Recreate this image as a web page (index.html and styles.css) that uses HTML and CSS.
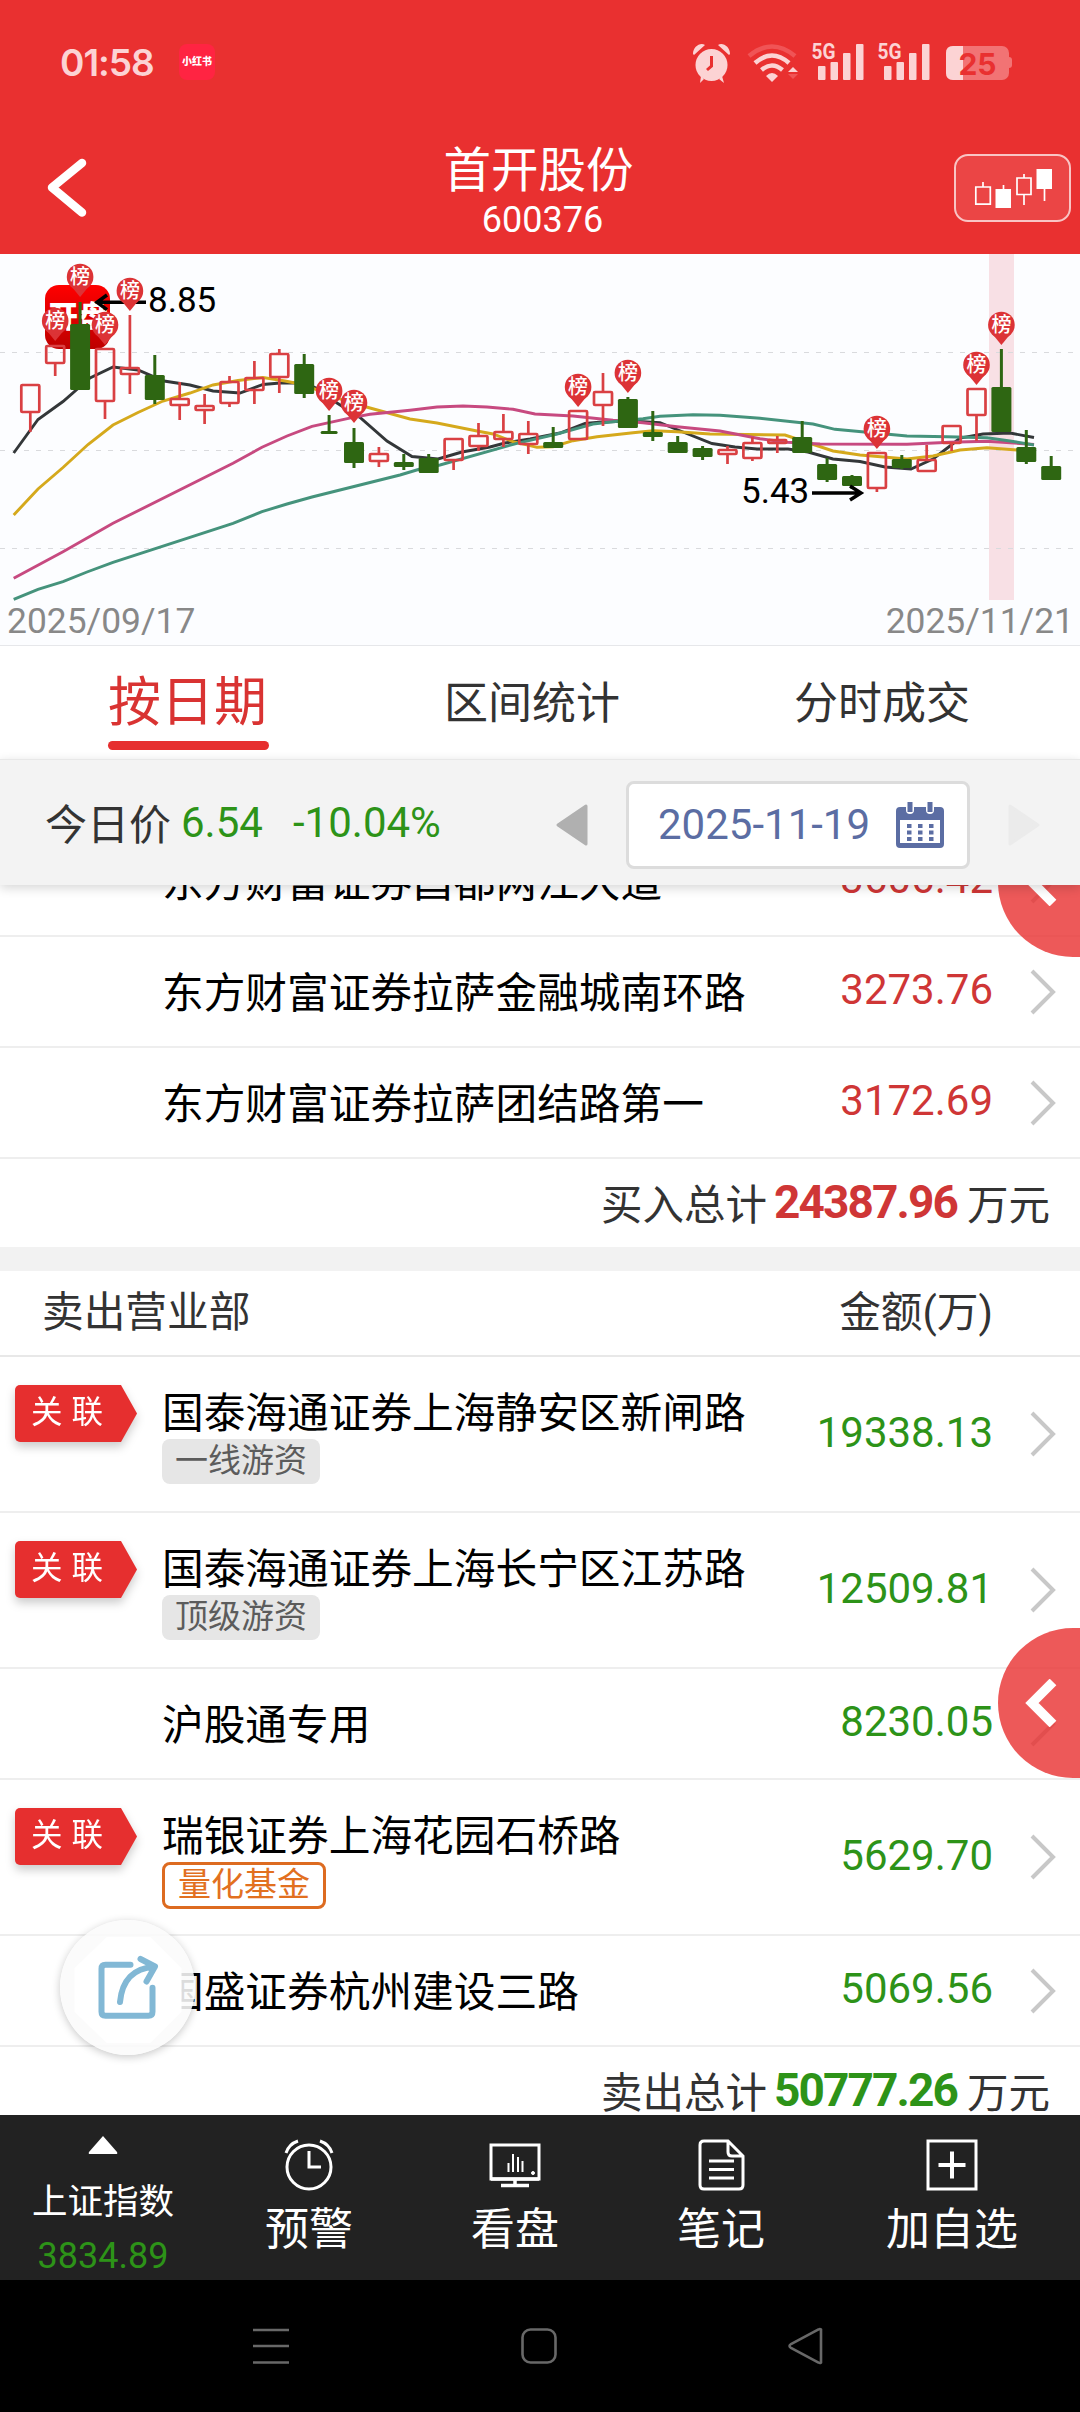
FILE: index.html
```html
<!DOCTYPE html>
<html lang="zh-CN">
<head>
  <meta charset="UTF-8" />
  <meta name="viewport" content="width=device-width, initial-scale=1.0" />
  <title>首开股份 600376</title>
  <link rel="stylesheet" href="styles.css">
</head>
<body>
  <div class="app">
    <!-- Status bar -->
    <div class="status-bar">
      <span class="status-time">01:58</span>
      <span class="status-app">小红书</span>
      <svg class="status-icons" width="322" height="44" viewBox="692 40 322 44">
        <g fill="#fcd3d4">
          <!-- alarm -->
          <circle cx="711.5" cy="65" r="16"/>
          <path d="M693 54c0-7 7-12 12-9l-11 10zM730 54c0-7-7-12-12-9l11 10zM701 76l3 3-4 4zM722 76l-3 3 5 4z"/>
          <!-- wifi -->
          <path d="M772 82l-6-6q6-6 12 0z"/>
          <path d="M793 67l5 5h-10z"/>
          <!-- signal -->
          <rect x="818" y="66" width="7.5" height="14" rx="1"/>
          <rect x="830.5" y="62" width="7.5" height="18" rx="1"/>
          <rect x="843" y="53" width="7.5" height="27" rx="1"/>
          <rect x="856" y="44" width="7.5" height="36" rx="1"/>
          <rect x="884" y="66" width="7.5" height="14" rx="1"/>
          <rect x="896.5" y="62" width="7.5" height="18" rx="1"/>
          <rect x="909" y="53" width="7.5" height="27" rx="1"/>
          <rect x="922" y="44" width="7.5" height="36" rx="1"/>
        </g>
        <path d="M788 74h10l-5 5z" fill="#f05456"/>
        <g fill="none" stroke-width="4.5">
          <path d="M749 56q23-19 46 0" stroke="#f05456"/>
          <path d="M755 63q17-15 34 0M761.500 70q10.500-9 21 0" stroke="#fcd3d4"/>
          <path d="M711.500 56v10l-4.500 4" stroke="#e93030" stroke-width="3"/>
        </g>
        <text class="net" x="811.500" y="59" textLength="24" lengthAdjust="spacingAndGlyphs">5G</text>
        <text class="net" x="877.500" y="59" textLength="24" lengthAdjust="spacingAndGlyphs">5G</text>
        <!-- battery -->
        <rect x="946" y="46" width="63" height="34" rx="7" fill="#f27374"/>
        <path d="M1009 57q3 0 3 3v5q0 3-3 3z" fill="#f27374"/>
        <path d="M963 46h-10q-7 0-7 7v20q0 7 7 7h10z" fill="#fcd3d4"/>
        <text class="level" x="977.500" y="74.500" text-anchor="middle">25</text>
      </svg>
    </div>

    <!-- Header -->
    <div class="header">
      <svg class="back" width="46" height="64" viewBox="44 156 46 64">
        <path d="M82 163L52 187.500l30 25" fill="none" stroke="#fff" stroke-width="8.500" stroke-linecap="round" stroke-linejoin="round"/>
      </svg>
      <div class="title">
        <h1>首开股份</h1>
        <span>600376</span>
      </div>
      <div class="kline-button">
        <svg width="80" height="40" viewBox="973 167 80 40">
          <g fill="none" stroke="#fff" stroke-width="1.700">
            <path d="M974.800 186h14.500v17.200h-14.500zM982 186v-5M1002.500 188v-4M1016 177h14v16.500h-14zM1023 177v-4M1023 193v11M1043.500 188v12"/>
          </g>
          <path d="M994.500 188h15.500v19h-15.500zM1035.500 168h15.500v20h-15.500z" fill="#fff"/>
        </svg>
      </div>
    </div>

    <!-- K line chart, candles and pins are filled in by the script below -->
    <svg class="chart" width="1080" height="391" viewBox="0 254 1080 391">
      <defs>
        <linearGradient id="badge" x1="0" y1="0" x2="0" y2="1">
          <stop offset="0" stop-color="#ff0000"/>
          <stop offset="1" stop-color="#bd0000"/>
        </linearGradient>
      </defs>
      <rect x="989" y="254" width="25" height="346" fill="#f8e0e5"/>
      <path class="grid" d="M0 352.500h1074M0 450.500h1074M0 548.500h1074"/>
      <rect x="45" y="285" width="65" height="64" rx="14" fill="url(#badge)"/>
      <text class="badge-text" x="78" y="327" text-anchor="middle">开盘</text>
      <g class="ma">
        <polyline stroke="#333739" points="13.700,453 38,419.500 63,401.500 90,378 113,367 138,370 164,381 190,385 213,391 240,393 263,384.500 280,383 305,383 318,389 337,403 360,417.500 387,441 412,456.500 438,459 462,452 490,447 505,443 530,439 560,433 585,423.500 602,422 630,421 660,422.700 678,430 712,443.500 735,447 757,449 788,449 808,452 833,459 860,461.500 885,467 911,469 933,459 950,446 960,438 983,434 1010,433 1034,437.500"/>
        <polyline stroke="#d5a91c" points="13.700,515 38,489 63,467.500 88,444.500 113,425 138,412.500 163,401 190,393 213,385 238,380.500 263,377.500 285,381 300,384 318,390 345,401 370,408 410,419 437,423 477,431 493,434 513,441.700 537,447.300 553,446.700 573,440.700 597,436.700 633,432.700 653,430.700 677,431.700 710,434 785,435 797,439 833,451 860,455 907,459 933,456 960,450 987,447.700 1017,450 1034,451.500"/>
        <polyline stroke="#c74a80" points="13.700,578.300 63,551.700 113,523.300 233,463.300 262,447.300 287,436 312,426.300 353,417.300 370,414.300 410,410.300 437,407 463,406 487,407 513,409.300 535,414 573,416 613,420.300 643,422.700 677,426.700 720,431 760,438.700 787,442.300 820,444 907,444.300 950,442.300 987,441.300 1034,444.500"/>
        <polyline stroke="#45937c" points="13.700,599.300 38,589.300 63,581.700 87,572 113,562.300 233,523.300 262,511.700 287,504 312,497 400,475 420,469 440,465 517,443.300 557,434 593,424 613,421.700 643,418.700 660,416.300 693,414.700 720,415.300 760,418.300 813,424 835,429.300 907,436 947,436.700 987,437.700 1010,441 1034,445"/>
      </g>
      <g id="candles"></g>
      <g fill="none" stroke="#000" stroke-width="3.500">
        <path d="M97 302.300h49M107 295l-10 7.300 10 7.300"/>
        <path d="M812 493h48M850 486l11 7-11 7"/>
      </g>
      <text class="price" x="148" y="311.500">8.85</text>
      <text class="price" x="741" y="502.500">5.43</text>
      <g id="pins"></g>
      <text class="date" x="7" y="633">2025/09/17</text>
      <text class="date" x="1074" y="633" text-anchor="end">2025/11/21</text>
    </svg>

    <!-- Tabs -->
    <div class="tabs">
      <div class="tab active">按日期</div>
      <div class="tab">区间统计</div>
      <div class="tab">分时成交</div>
    </div>

    <!-- Price and date picker -->
    <div class="price-bar">
      <span class="label">今日价</span>
      <span class="value">6.54</span>
      <span class="percent">-10.04%</span>
      <svg class="prev" width="32" height="42" viewBox="0 0 32 42"><path d="M2 21L30 2v38z" fill="#b0b0b0" stroke="#b0b0b0" stroke-width="3" stroke-linejoin="round"/></svg>
      <div class="date-box">
        <span>2025-11-19</span>
        <svg width="48" height="46" viewBox="0 0 48 46">
          <path d="M4 5h6v3a4 4 0 0 0 8 0V5h12v3a4 4 0 0 0 8 0V5h6q4 0 4 4v33q0 4-4 4H4q-4 0-4-4V9q0-4 4-4zM4 18v23h40V18z" fill="#5b6da3" fill-rule="evenodd"/>
          <path d="M14 0v10M34 0v10" stroke="#5b6da3" stroke-width="5"/>
          <path d="M11 24h28M11 30.500h28M11 37h28" stroke="#5b6da3" stroke-width="4" stroke-dasharray="4.500 6.500"/>
        </svg>
      </div>
      <svg class="next" width="32" height="42" viewBox="0 0 32 42"><path d="M30 21L2 2v38z" fill="#ebebeb" stroke="#ebebeb" stroke-width="3" stroke-linejoin="round"/></svg>
    </div>

    <!-- Broker list -->
    <div class="list">
      <div class="list-scroll">
        <div class="row">
          <div class="name">东方财富证券昌都两江大道</div>
          <div class="amount buy">3606.42</div>
          <svg class="arrow" viewBox="0 0 26 46"><path d="M2 2l21 21L2 44"/></svg>
        </div>
        <div class="row">
          <div class="name">东方财富证券拉萨金融城南环路</div>
          <div class="amount buy">3273.76</div>
          <svg class="arrow" viewBox="0 0 26 46"><path d="M2 2l21 21L2 44"/></svg>
        </div>
        <div class="row">
          <div class="name">东方财富证券拉萨团结路第一</div>
          <div class="amount buy">3172.69</div>
          <svg class="arrow" viewBox="0 0 26 46"><path d="M2 2l21 21L2 44"/></svg>
        </div>
        <div class="total">买入总计<b class="buy">24387.96</b>万元</div>
        <div class="section-head">
          <span>卖出营业部</span>
          <span>金额(万)</span>
        </div>
        <div class="row tagged">
          <div class="ribbon"><span>关联</span></div>
          <div class="name">国泰海通证券上海静安区新闸路<br><span class="tag">一线游资</span></div>
          <div class="amount sell">19338.13</div>
          <svg class="arrow" viewBox="0 0 26 46"><path d="M2 2l21 21L2 44"/></svg>
        </div>
        <div class="row tagged">
          <div class="ribbon"><span>关联</span></div>
          <div class="name">国泰海通证券上海长宁区江苏路<br><span class="tag">顶级游资</span></div>
          <div class="amount sell">12509.81</div>
          <svg class="arrow" viewBox="0 0 26 46"><path d="M2 2l21 21L2 44"/></svg>
        </div>
        <div class="row">
          <div class="name">沪股通专用</div>
          <div class="amount sell">8230.05</div>
          <svg class="arrow" viewBox="0 0 26 46"><path d="M2 2l21 21L2 44"/></svg>
        </div>
        <div class="row tagged">
          <div class="ribbon"><span>关联</span></div>
          <div class="name">瑞银证券上海花园石桥路<br><span class="tag fund">量化基金</span></div>
          <div class="amount sell">5629.70</div>
          <svg class="arrow" viewBox="0 0 26 46"><path d="M2 2l21 21L2 44"/></svg>
        </div>
        <div class="row">
          <div class="name">国盛证券杭州建设三路</div>
          <div class="amount sell">5069.56</div>
          <svg class="arrow" viewBox="0 0 26 46"><path d="M2 2l21 21L2 44"/></svg>
        </div>
        <div class="total">卖出总计<b class="sell">50777.26</b>万元</div>
      </div>

      <!-- Floating buttons -->
      <div class="side-button top">
        <svg width="32" height="48" viewBox="0 0 32 48"><path d="M28 3L7 24l21 21" fill="none" stroke="#fff" stroke-width="9.500"/></svg>
      </div>
      <div class="side-button">
        <svg width="32" height="48" viewBox="0 0 32 48"><path d="M28 3L7 24l21 21" fill="none" stroke="#fff" stroke-width="9.500"/></svg>
      </div>
      <div class="share-button">
        <svg width="135" height="135" viewBox="59.500 1920 135 135">
          <path d="M106 1937h44l31 31v44l-31 31h-44l-32-31v-44z" fill="#fff"/>
          <g fill="none" stroke="#82b8d5" stroke-width="6" stroke-linecap="round" stroke-linejoin="round">
            <path d="M130 1964.700h-25q-4 0-4 4v43q0 4 4 4h43q4 0 4-4v-24"/>
            <path d="M119.500 2002c2-22 14-34 34-35M140 1959l14.500 7.500-8.500 15"/>
          </g>
        </svg>
      </div>
    </div>

    <!-- Toolbar -->
    <div class="toolbar">
      <div class="index">
        <svg width="30" height="18" viewBox="0 0 30 18"><path d="M15 0L29 16q1 2-1 2H2q-2 0-1-2z" fill="#fff"/></svg>
        <span class="index-name">上证指数</span>
        <span class="index-value">3834.89</span>
      </div>
      <div class="tool">
        <svg viewBox="0 0 52 52" fill="none" stroke="#fff" stroke-width="3">
          <circle cx="26" cy="28" r="22"/>
          <path d="M26 12v16h12M3 14Q6 5 15 2M37 2q9 3 12 12"/>
        </svg>
        <span>预警</span>
      </div>
      <div class="tool">
        <svg viewBox="0 0 52 52" fill="none" stroke="#fff" stroke-width="3">
          <path d="M2 6h48v34H2z"/>
          <path d="M2 40h48M26 40v6M12 46.500h28" stroke-width="3.500"/>
          <path d="M19.500 24v9M24 15v18M29 18v15M33.500 22v11" stroke-width="2"/>
          <circle cx="44" cy="34" r="1.500" fill="#fff" stroke-width="1"/>
        </svg>
        <span>看盘</span>
      </div>
      <div class="tool">
        <svg viewBox="0 0 52 52" fill="none" stroke="#fff" stroke-width="3">
          <path d="M33 2H9q-4 0-4 4v40q0 4 4 4h35q4 0 4-4V17zM33 2v11q0 4 4 4h11"/>
          <path d="M14 22h25M14 30.500h25M14 39h25"/>
        </svg>
        <span>笔记</span>
      </div>
      <div class="tool wide">
        <svg viewBox="0 0 52 52" fill="none" stroke="#fff" stroke-width="3">
          <path d="M2 2h48v48H2z"/>
          <path d="M26 12.500v27M12.500 26h27" stroke-width="4"/>
        </svg>
        <span>加自选</span>
      </div>
    </div>

    <!-- System navigation -->
    <div class="nav-bar">
      <svg width="38" height="38" viewBox="0 0 38 38"><path d="M1 3h36M1 19h36M1 35.500h36"/></svg>
      <svg width="38" height="38" viewBox="0 0 38 38"><rect x="2.500" y="2.500" width="33" height="33" rx="8"/></svg>
      <svg width="38" height="38" viewBox="0 0 38 38"><path d="M33 2.500v33q-1 1-2.500 0L3 21q-3-2 0-4L30.500 2.500q1.500-1 2.500 0z"/></svg>
    </div>
  </div>

  <script>
    // [high, body top, body bottom, low, 1 = up / 0 = down]
    const candles = [
      [384, 384, 413, 432, 1], [345, 345, 364, 376, 1], [302, 324, 390, 390, 0],
      [348, 348, 402, 419, 1], [315, 367, 375, 394, 1], [355, 375, 400, 404, 0],
      [382, 398, 406, 420, 1], [394, 405, 411, 424, 1], [376, 381, 404, 407, 1],
      [361, 377, 391, 404, 1], [349, 353, 378, 393, 1], [354, 364, 394, 398, 0],
      [415, 431, 434, 434, 0], [428, 442, 463, 468, 0], [447, 453, 462, 467, 1],
      [454, 462, 467, 470, 0], [454, 458, 473, 473, 0], [438, 438, 461, 470, 1],
      [423, 435, 447, 451, 1], [414, 431, 440, 447, 1], [421, 433, 445, 454, 1],
      [427, 442, 448, 448, 0], [410, 410, 440, 440, 1], [373, 391, 406, 426, 1],
      [397, 399, 428, 428, 0], [411, 432, 437, 441, 0], [436, 442, 453, 453, 0],
      [446, 448, 457, 460, 0], [446, 449, 455, 464, 1], [437, 442, 459, 461, 1],
      [436, 439, 444, 453, 1], [421, 437, 453, 453, 0], [458, 464, 480, 482, 0],
      [475, 476, 486, 489, 0], [452, 452, 489, 492, 1], [455, 459, 468, 469, 0],
      [445, 459, 472, 472, 1], [425, 425, 444, 451, 1], [388, 388, 416, 441, 1],
      [349, 387, 432, 432, 0], [430, 447, 462, 464, 0], [456, 466, 480, 480, 0]
    ];
    // [candle index, pin centre y]
    const pins = [
      [1, 321], [2, 277], [3, 325], [4, 291], [12, 391], [13, 403],
      [22, 387], [24, 373], [34, 429], [38, 365], [39, 325]
    ];

    const xOf = i => 30.3 + i * 24.9;

    document.getElementById('candles').innerHTML = candles.map((c, i) => {
      const [high, top, bottom, low, up] = c;
      const x = xOf(i);
      const width = i === 12 ? 17 : 20;
      if (up) {
        return `<path class="up" d="M${x} ${high}V${top + 1}M${x} ${bottom - 1}V${low}"/>
          <rect class="up" x="${x - 9}" y="${top + 1}" width="18" height="${bottom - top - 2}" rx="1"/>`;
      }
      return `<path class="down" d="M${x} ${high}V${low}"/>
        <rect class="down-body" x="${x - width / 2}" y="${top}" width="${width}" height="${bottom - top}" rx="1.5"/>`;
    }).join('');

    document.getElementById('pins').innerHTML = pins.map(([i, y]) => {
      const x = xOf(i);
      return `<path class="pin" d="M${x - 9} ${y + 9}L${x} ${y + 20}L${x + 9} ${y + 9}z"/>
        <circle class="pin" cx="${x}" cy="${y}" r="13.3"/>
        <text class="pin-text" x="${x}" y="${y + 7}" text-anchor="middle">榜</text>`;
    }).join('');
  </script>
</body>
</html>
```
FILE: styles.css
```css
/* Base Styles */
* {
  box-sizing: border-box;
}

body {
  margin: 0;
  background: #fff;
  color: #333;
  font-family: Roboto, "Noto Sans CJK SC", sans-serif;
}

.app {
  display: flex;
  flex-direction: column;
  width: 1080px;
  height: 2412px;
  overflow: hidden;
}

svg {
  display: block;
  flex-shrink: 0;
}

/* Status bar */
.status-bar {
  display: flex;
  align-items: center;
  height: 124px;
  padding: 0 66px 0 60px;
  background: #e93030;
}

.status-time {
  width: 119px;
  font-family: Inter, sans-serif;
  font-size: 37px;
  font-weight: 600;
  letter-spacing: -1px;
  color: #fcd3d4;
}

.status-app {
  width: 36px;
  height: 36px;
  border-radius: 8px;
  background: #ff2442;
  color: #fff;
  font-size: 10px;
  font-weight: 900;
  line-height: 36px;
  text-align: center;
  white-space: nowrap;
}

.status-icons {
  margin-left: auto;
}

.net {
  font-size: 22px;
  font-weight: 700;
  fill: #fcd3d4;
}

.level {
  font-family: Inter, sans-serif;
  font-size: 30px;
  font-weight: 700;
  fill: #e93030;
}

/* Header */
.header {
  display: flex;
  align-items: center;
  justify-content: space-between;
  height: 130px;
  padding: 0 9px 3px 44px;
  background: #e93030;
  color: #fff;
}

.title {
  display: flex;
  flex-direction: column;
  align-items: center;
  margin-left: 41px;
  padding-top: 8px;
}

.title h1 {
  margin: 0 8px 0 0;
  font-size: 47.5px;
  font-weight: 400;
  line-height: 56px;
}

.title span {
  font-size: 36px;
  line-height: 42px;
}

.kline-button {
  width: 117px;
  height: 68px;
  padding: 12px 18px;
  border: 2px solid #f9c4c4;
  border-radius: 14px;
  background: #eb4545;
}

/* Chart */
.chart {
  background: #fcfdff;
}

.grid {
  fill: none;
  stroke: #d9dadd;
  stroke-width: 1;
  stroke-dasharray: 5 7;
}

.ma {
  fill: none;
  stroke-width: 2.9;
}

.up {
  fill: none;
  stroke: #d94043;
  stroke-width: 2.7;
}

.down {
  stroke: #2e6612;
  stroke-width: 3;
}

.down-body {
  fill: #2e6612;
}

.pin {
  fill: #dc3336;
}

.pin-text {
  font-size: 20px;
  font-weight: 500;
  fill: #fff;
}

.badge-text {
  font-size: 30px;
  font-weight: 900;
  fill: #fff;
}

.price {
  font-size: 35px;
  fill: #000;
}

.date {
  font-size: 35.4px;
  fill: #888;
}

/* Tabs */
.tabs {
  display: flex;
  gap: 174px;
  height: 114px;
  padding-left: 108px;
  border-top: 1px solid #e6e7ea;
  background: #fff;
}

.tab {
  height: 106px;
  font-size: 44px;
  line-height: 116px;
}

.tab.active {
  width: 162px;
  font-size: 53px;
  line-height: 114px;
  color: #d93332;
}

.tab.active::after {
  content: "";
  display: block;
  width: 161px;
  height: 9px;
  margin-top: -19px;
  border-radius: 5px;
  background: #e62f2f;
}

/* Price bar */
.price-bar {
  display: flex;
  align-items: center;
  z-index: 1;
  height: 126px;
  padding: 5px 40px 0 45px;
  border-top: 1px solid #e8e8e8;
  background: #f3f3f3;
  box-shadow: 0 3px 10px rgba(0, 0, 0, 0.16);
  font-size: 42px;
}

.price-bar .label {
  width: 136px;
  margin-bottom: 8px;
}

.price-bar .value {
  width: 112px;
  margin-bottom: 5px;
  color: #2d9318;
}

.price-bar .percent {
  margin-bottom: 5px;
  color: #2d9318;
}

.prev {
  margin-left: auto;
}

.date-box {
  display: flex;
  align-items: center;
  justify-content: space-between;
  width: 344px;
  height: 88px;
  margin: 0 38px;
  padding: 0 23px 0 29px;
  border: 3px solid #dcdcdc;
  border-radius: 8px;
  background: #fff;
  color: #5b6da3;
}

.date-box span {
  margin-bottom: 2px;
}

/* Broker list */
.list {
  position: relative;
  height: 1230px;
  overflow: hidden;
  background: #fff;
}

.list-scroll {
  margin-top: -59px;
}

.row {
  display: flex;
  align-items: center;
  position: relative;
  height: 111px;
  padding: 0 24px 0 162px;
  border-bottom: 2px solid #eeeeee;
  font-size: 42px;
}

.row.tagged {
  height: 156px;
}

.name {
  flex: 1;
  padding-top: 5px;
  color: #000;
  font-size: 41.7px;
  line-height: 50px;
  white-space: nowrap;
}

.tagged .name {
  padding-top: 10px;
}

.amount {
  margin: 0 37px 4px 0;
}

.buy {
  color: #cf3636;
}

.sell {
  color: #2d9318;
}

.arrow {
  width: 26px;
  height: 46px;
  fill: none;
  stroke: #c8c8c8;
  stroke-width: 4;
}

.ribbon {
  position: absolute;
  left: 15px;
  top: 28px;
  filter: drop-shadow(0 5px 5px rgba(0, 0, 0, 0.2));
}

.ribbon span {
  display: block;
  width: 122px;
  height: 57px;
  padding-left: 16px;
  border-radius: 5px 0 0 5px;
  background: #e62f2f;
  clip-path: polygon(0 0, 106px 0, 100% 50%, 106px 100%, 0 100%);
  color: #fff;
  font-size: 31.5px;
  letter-spacing: 9px;
  line-height: 55px;
}

.tag {
  display: inline-block;
  height: 45px;
  padding: 0 13px;
  border-radius: 8px;
  background: #e6e6e6;
  color: #5c5c5c;
  font-size: 33px;
  line-height: 43px;
  vertical-align: top;
}

.tag.fund {
  height: 47px;
  border: 3px solid #dd6b20;
  background: #fff;
  color: #e2701f;
  line-height: 39px;
}

.total {
  display: flex;
  align-items: center;
  justify-content: flex-end;
  height: 88px;
  padding: 0 30px 3px 0;
  font-size: 41.5px;
}

.total b {
  margin: 0 10px 0 7px;
  font-size: 46px;
  letter-spacing: -1.9px;
}

.section-head {
  display: flex;
  justify-content: space-between;
  height: 110px;
  padding: 0 87px 0 42px;
  border-top: 24px solid #f2f2f2;
  border-bottom: 2px solid #e8e8e8;
  font-size: 41.7px;
  line-height: 84px;
}

/* Floating buttons */
.side-button {
  position: absolute;
  right: 0;
  top: 743px;
  width: 82px;
  height: 150px;
  padding: 51px 0 0 27px;
  border-radius: 75px 0 0 75px;
  background: rgba(232, 48, 48, 0.8);
}

.side-button.top {
  top: -78px;
}

.share-button {
  position: absolute;
  left: 60px;
  top: 1035px;
  width: 135px;
  height: 135px;
  border-radius: 50%;
  background: rgba(250, 250, 250, 0.88);
  box-shadow: 0 2px 8px rgba(0, 0, 0, 0.22);
}

/* Toolbar */
.toolbar {
  display: flex;
  height: 165px;
  background: #222;
  color: #fff;
}

.index,
.tool {
  display: flex;
  flex-direction: column;
  align-items: center;
  width: 206px;
}

.index {
  padding-top: 21px;
}

.index-name {
  margin-top: 23px;
  font-size: 35.5px;
  line-height: 50px;
}

.index-value {
  margin-top: 8px;
  font-size: 36px;
  line-height: 42px;
  color: #2d9318;
}

.tool {
  padding-top: 24px;
  font-size: 44px;
  line-height: 60px;
}

.tool.wide {
  width: 256px;
}

.tool svg {
  width: 52px;
  height: 52px;
  margin-bottom: 9px;
}

/* System navigation */
.nav-bar {
  display: flex;
  flex: 1;
  gap: 230px;
  padding: 47px 0 0 252px;
  background: #000;
}

.nav-bar svg {
  fill: none;
  stroke: #686868;
  stroke-width: 2.6;
}
```
